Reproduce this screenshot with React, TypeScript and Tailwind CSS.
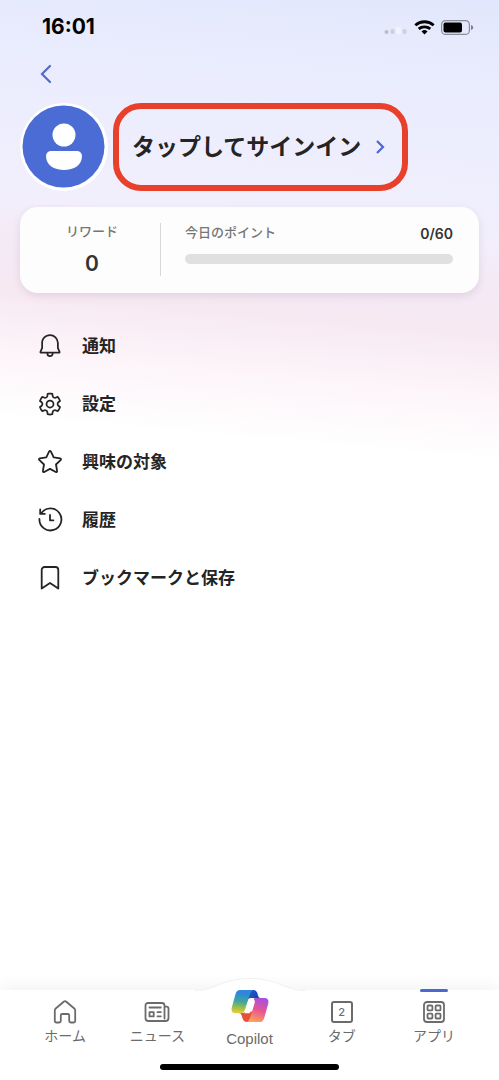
import type { ReactNode } from 'react'

const BellIcon = () => (
  <svg className="h-7 w-7 shrink-0" viewBox="0 0 24 24" fill="currentColor" aria-hidden="true">
    <path d="M12 1.996a7.49 7.49 0 0 1 7.496 7.25l.004.25v4.097l1.38 3.156a1.25 1.25 0 0 1-1.145 1.75L15 18.502a3 3 0 0 1-5.995.177L9 18.499H4.275a1.251 1.251 0 0 1-1.147-1.747L4.5 13.594V9.496c0-4.155 3.352-7.5 7.5-7.5ZM13.5 18.5l-3 .002a1.5 1.5 0 0 0 2.993.145l.006-.147ZM12 3.496c-3.32 0-6 2.674-6 6v4.41L4.656 17h14.697L18 13.907V9.509l-.004-.225A5.988 5.988 0 0 0 12 3.496Z" />
  </svg>
)

const GearIcon = () => (
  <svg className="h-7 w-7 shrink-0" viewBox="0 0 24 24" fill="currentColor" aria-hidden="true">
    <path d="M12.012 2.25c.734.008 1.465.093 2.182.253a.75.75 0 0 1 .582.649l.17 1.527a1.384 1.384 0 0 0 1.927 1.116l1.401-.615a.75.75 0 0 1 .85.174 9.792 9.792 0 0 1 2.204 3.792.75.75 0 0 1-.271.825l-1.242.916a1.381 1.381 0 0 0 0 2.226l1.243.915a.75.75 0 0 1 .272.826 9.797 9.797 0 0 1-2.204 3.792.75.75 0 0 1-.848.175l-1.407-.617a1.38 1.38 0 0 0-1.926 1.114l-.169 1.526a.75.75 0 0 1-.572.647 9.518 9.518 0 0 1-4.406 0 .75.75 0 0 1-.572-.647l-.168-1.524a1.382 1.382 0 0 0-1.926-1.11l-1.406.616a.75.75 0 0 1-.849-.175 9.798 9.798 0 0 1-2.204-3.796.75.75 0 0 1 .272-.826l1.243-.916a1.38 1.38 0 0 0 0-2.226l-1.243-.914a.75.75 0 0 1-.271-.826 9.793 9.793 0 0 1 2.204-3.792.75.75 0 0 1 .85-.174l1.4.615a1.387 1.387 0 0 0 1.93-1.118l.17-1.526a.75.75 0 0 1 .583-.65c.717-.159 1.45-.243 2.201-.252Zm0 1.5a9.135 9.135 0 0 0-1.354.117l-.109.977A2.886 2.886 0 0 1 6.525 7.17l-.898-.394a8.293 8.293 0 0 0-1.348 2.317l.798.587a2.881 2.881 0 0 1 0 4.643l-.799.588c.32.842.776 1.626 1.348 2.322l.905-.397a2.882 2.882 0 0 1 4.017 2.318l.11.984c.889.15 1.798.15 2.687 0l.11-.984a2.881 2.881 0 0 1 4.018-2.322l.905.396a8.296 8.296 0 0 0 1.347-2.318l-.798-.588a2.881 2.881 0 0 1 0-4.643l.796-.587a8.293 8.293 0 0 0-1.348-2.317l-.896.392a2.884 2.884 0 0 1-4.023-2.324l-.11-.976a8.988 8.988 0 0 0-1.333-.117ZM12 8.25a3.75 3.75 0 1 1 0 7.5 3.75 3.75 0 0 1 0-7.5Zm0 1.5a2.25 2.25 0 1 0 0 4.5 2.25 2.25 0 0 0 0-4.5Z" />
  </svg>
)

const LineIcon = ({ children }: { children: ReactNode }) => (
  <svg
    className="h-7 w-7 shrink-0"
    viewBox="0 0 28 28"
    fill="none"
    stroke="currentColor"
    strokeWidth={1.8}
    strokeLinecap="round"
    strokeLinejoin="round"
    aria-hidden="true"
  >
    {children}
  </svg>
)

const StarIcon = () => (
  <LineIcon>
    <path d="M13.2 3.4a.9.9 0 0 1 1.6 0l2.9 6 6.6 1a.9.9 0 0 1 .5 1.5L20 16.5l1.1 6.5a.9.9 0 0 1-1.3 1L14 20.9l-5.8 3.1a.9.9 0 0 1-1.3-1L8 16.5l-4.800-4.600a.9.9 0 0 1 .5-1.500l6.600-1Z" />
  </LineIcon>
)

const HistoryIcon = () => (
  <LineIcon>
    <path d="M5.400 7.100A11 11 0 1 1 3.400 13" />
    <path d="M4.200 3.300v4.600h4.600M14 9v5.300h3.400" />
  </LineIcon>
)

const BookmarkIcon = () => (
  <LineIcon>
    <path d="M8.600 3h10.800a2.900 2.900 0 0 1 2.900 2.900v18.700L14 18.900l-8.300 5.700V5.900A2.900 2.900 0 0 1 8.600 3Z" />
  </LineIcon>
)

const CopilotLogo = () => (
  <svg className="h-[34px] w-[38px] shrink-0" viewBox="0 0 38 34" aria-hidden="true">
    <defs>
      <linearGradient id="cool" x1="0.5" y1="0" x2="0.4" y2="1">
        <stop offset="0.15" stopColor="#2f86dc" />
        <stop offset="0.5" stopColor="#3fa79c" />
        <stop offset="0.8" stopColor="#a3c340" />
        <stop offset="1" stopColor="#f0c93a" />
      </linearGradient>
      <linearGradient id="warm" x1="0.7" y1="0" x2="0.4" y2="1">
        <stop offset="0" stopColor="#a450e4" />
        <stop offset="0.5" stopColor="#e75592" />
        <stop offset="1" stopColor="#fba25a" />
      </linearGradient>
      <linearGradient id="fold" x1="0" y1="0" x2="1" y2="0.5">
        <stop offset="0" stopColor="#2469d2" />
        <stop offset="1" stopColor="#1740ad" />
      </linearGradient>
    </defs>
    <path fill="url(#fold)" d="M17 1h5c3 0 4 2 4.600 4l.6 2c.4 1.300 1 2 2.200 2H20l-5 2Z" />
    <path fill="#e4523a" d="M8 24c1.400 0 2 .7 2.400 2l1 3c.6 2.200 1.800 4 4.600 4h1l6-9-5-3-6 3Z" />
    <path fill="url(#cool)" d="M9 1h14c-2.200 0-3.300 1.700-4 4l-4.800 15c-1 3-2 4.200-5 4.200H4.500C1 24.200 0 21.500.8 18.500L4.400 5.500C5.200 2.500 6.400 1 9 1Z" />
    <path fill="url(#warm)" d="M24 9h9.500c3.500 0 4.500 2.700 3.700 5.700l-3.600 13c-.8 3-2 5.300-5 5.300H15c2.200 0 3.300-1.700 4-4l4.500-14.500c.8-2.500 0-4-1.500-4.500Z" />
    <path fill="#fff" d="M18 9.500h3.500c1.400 0 1.900 1.200 1.400 2.800l-3 9.700c-.5 1.600-1.300 2.300-2.700 2.300H13c.8-.7 1.100-1.600 1.400-2.600Z" />
  </svg>
)

const NavIcon = ({ children }: { children: ReactNode }) => (
  <svg
    className="h-6 w-[26px] shrink-0"
    viewBox="0 0 26 24"
    fill="none"
    stroke="currentColor"
    strokeWidth={1.8}
    strokeLinejoin="round"
    strokeLinecap="round"
    aria-hidden="true"
  >
    {children}
  </svg>
)

const menuItems = [
  { label: '通知', icon: <BellIcon /> },
  { label: '設定', icon: <GearIcon /> },
  { label: '興味の対象', icon: <StarIcon /> },
  { label: '履歴', icon: <HistoryIcon /> },
  { label: 'ブックマークと保存', icon: <BookmarkIcon /> },
]

const tabs = [
  {
    label: 'ホーム',
    icon: (
      <NavIcon>
        <path d="M4.300 22.500a1.500 1.500 0 0 1-1.500-1.500V10.500c0-.8.300-1.500.9-2l8-6.800a2 2 0 0 1 2.600 0l8 6.800c.6.5.9 1.200.9 2V21a1.500 1.500 0 0 1-1.500 1.500h-3a1.500 1.500 0 0 1-1.500-1.500v-5.500a1.500 1.500 0 0 0-1.500-1.500h-5.400a1.500 1.500 0 0 0-1.500 1.500V21a1.500 1.500 0 0 1-1.500 1.500Z" />
      </NavIcon>
    ),
  },
  {
    label: 'ニュース',
    icon: (
      <NavIcon>
        <path d="M20.500 18.500V5.500A2.500 2.500 0 0 0 18 3H4a2.500 2.500 0 0 0-2.500 2.500V18a3 3 0 0 0 3 3h17a3 3 0 0 0 3-3V8.500a1.800 1.800 0 0 0-1.800-1.800h-2" />
        <path d="M5.500 7.500h11.300M13.500 12.200h3.300M13.500 16.300h3.300M5.500 12.200h4.200v4.200H5.500z" />
      </NavIcon>
    ),
  },
  { label: 'Copilot', icon: <CopilotLogo /> },
  {
    label: 'タブ',
    icon: (
      <span className="flex h-6 items-center">
        <span className="flex h-[22px] w-[22px] items-center justify-center rounded-[3px] border-2 border-[#6b6b6b] text-[11px] leading-none font-medium">
          2
        </span>
      </span>
    ),
  },
  {
    label: 'アプリ',
    active: true,
    icon: (
      <NavIcon>
        <rect x="3" y="2" width="20" height="20" rx="3" />
        <rect x="6.500" y="5.500" width="4.900" height="4.900" rx="1" />
        <rect x="14.600" y="5.500" width="4.900" height="4.900" rx="1" />
        <rect x="6.500" y="13.600" width="4.900" height="4.900" rx="1" />
        <rect x="14.600" y="13.600" width="4.900" height="4.900" rx="1" />
      </NavIcon>
    ),
  },
]

function StatusBar() {
  return (
    <div className="flex h-[54px] items-center justify-between pr-6 pl-[42px]">
      <span className="text-[21px] leading-7 font-bold text-black">16:01</span>
      <svg className="h-[18px] w-[92px]" viewBox="0 0 92 18" aria-hidden="true">
        <circle cx="3.500" cy="14" r="2" fill="#b9bccb" />
        <rect x="7.500" y="11" width="4" height="5" rx="1.500" fill="#ccd0e0" />
        <rect x="13" y="9" width="5" height="7" rx="1.500" fill="#f1f3fd" />
        <rect x="19.500" y="11" width="4" height="5" rx="1.500" fill="#cdd1e2" />
        <g fill="none" stroke="#000" strokeWidth="2.800">
          <path d="M32.300 7.200a14 14 0 0 1 18.400 0" />
          <path d="M35.700 10.900a9 9 0 0 1 11.600 0" />
        </g>
        <path d="m41.500 16.500-3-3a4.300 4.300 0 0 1 6 0Z" />
        <rect x="58.600" y="2.600" width="27.800" height="13.800" rx="4" fill="none" stroke="#8b8d98" strokeWidth="1.200" />
        <rect x="60.500" y="4.500" width="18.500" height="10" rx="2" />
        <path d="M88 7v5c1.500-.4 2.200-1.300 2.200-2.500S89.500 7.400 88 7Z" fill="#7d7f8a" />
      </svg>
    </div>
  )
}

function RewardsCard() {
  return (
    <section className="mx-5 mt-4 flex rounded-[18px] bg-[#fdfdfd] pt-4 pb-[17px] shadow-[0_3px_8px_rgba(80,50,90,0.12)]">
      <div className="flex h-[53px] w-[141px] flex-col items-center border-r border-[#d8d8d8] pl-1">
        <span className="text-[13px] leading-4 font-medium text-[#757575]">リワード</span>
        <span className="mt-3 text-[21px] leading-[26px] font-semibold text-[#333]">0</span>
      </div>
      <div className="flex-1 pr-[26px] pl-6">
        <div className="flex h-[22px] items-center justify-between">
          <span className="pb-1 text-[13px] leading-4 font-medium text-[#757575]">今日のポイント</span>
          <span className="text-sm leading-5 font-semibold text-[#333]">0/60</span>
        </div>
        <div
          role="progressbar"
          aria-label="今日のポイント"
          aria-valuemin={0}
          aria-valuemax={60}
          aria-valuenow={0}
          className="mt-[9px] h-[10px] rounded-full bg-[#e0e0e0]"
        />
      </div>
    </section>
  )
}

function TabBar() {
  return (
    <nav className="relative bg-white shadow-[0_-3px_16px_rgba(0,0,0,0.06)]">
      {/* raised bump behind the Copilot logo */}
      <svg className="absolute -top-3 left-1/2 h-4 w-[110px] -translate-x-1/2" viewBox="0 0 110 16" aria-hidden="true">
        <path d="M0 12.500C20 12.500 27 .5 55 .5s35 12 55 12V16H0Z" fill="#fff" />
        <path d="M0 12.500C20 12.500 27 .5 55 .5s35 12 55 12" fill="none" stroke="#f1f1f1" />
      </svg>
      <ul className="relative flex px-[19px]">
        {tabs.map((tab) => (
          <li key={tab.label} className="flex-1">
            <a
              href="#"
              aria-current={tab.active ? 'page' : undefined}
              className="relative flex h-[60px] flex-col items-center justify-end pb-px text-[#6b6b6b]"
            >
              {tab.active && <span className="absolute -top-px h-[3px] w-7 rounded-full bg-[#4a69d0]" />}
              {tab.icon}
              {tab.label === 'Copilot' ? (
                <span className="mt-1.5 font-['Liberation_Sans',sans-serif] text-[15px] leading-5">{tab.label}</span>
              ) : (
                <span className="mt-0.5 mb-[3px] text-sm leading-5">{tab.label}</span>
              )}
            </a>
          </li>
        ))}
      </ul>
      <div className="flex h-[30px] justify-center pt-[14px]">
        <span className="h-1.5 w-[179px] rounded-full bg-black" />
      </div>
    </nav>
  )
}

export default function App() {
  return (
    <div className="flex min-h-screen flex-col bg-white bg-[linear-gradient(185deg,#e1e7fc_0px,#e9ecfd_80px,#eeeefd_180px,#f2effc_235px,#f4e9f5_290px,#f7e9f2_335px,#fcf4f9_390px,#ffffff_460px)] font-['Inter','Noto_Sans_CJK_JP',sans-serif] text-[#242424]">
      <StatusBar />

      <main className="flex-1">
        <button type="button" aria-label="戻る" className="ml-8 flex h-10 w-7 items-center justify-center">
          <svg className="h-5 w-3" viewBox="0 0 12 20" fill="none" stroke="#4f6bcb" strokeWidth={2.2} strokeLinecap="round" aria-hidden="true">
            <path d="M10 2 2 10l8 8" />
          </svg>
        </button>

        <div className="mt-[9px] flex gap-[5px] px-5">
          <svg className="h-[88px] w-[88px] shrink-0" viewBox="0 0 88 88" aria-hidden="true">
            <circle cx="44" cy="44" r="44" fill="#fff" />
            <circle cx="43.500" cy="43.500" r="41" fill="#4a6cd4" />
            <circle cx="44" cy="32" r="11.500" fill="#fff" />
            <path d="M31 48h26a5 5 0 0 1 5 5c0 9-8 14-18 14s-18-5-18-14a5 5 0 0 1 5-5Z" fill="#fff" />
          </svg>
          <button
            type="button"
            className="flex h-[88px] items-center gap-[14px] rounded-[28px] border-6 border-[#e8402a] pr-[17px] pl-[13px]"
          >
            <span className="text-[23px] leading-8 font-bold">タップしてサインイン</span>
            <svg className="h-4 w-2.5" viewBox="0 0 10 16" fill="none" stroke="#4a69d0" strokeWidth={2.2} aria-hidden="true">
              <path d="m2 2 6 6-6 6" />
            </svg>
          </button>
        </div>

        <RewardsCard />

        <ul className="mt-6">
          {menuItems.map((item) => (
            <li key={item.label}>
              <a href="#" className="flex h-[58px] items-center gap-[18px] pl-9">
                {item.icon}
                <span className="text-[17px] leading-6 font-semibold">{item.label}</span>
              </a>
            </li>
          ))}
        </ul>
      </main>

      <TabBar />
    </div>
  )
}
